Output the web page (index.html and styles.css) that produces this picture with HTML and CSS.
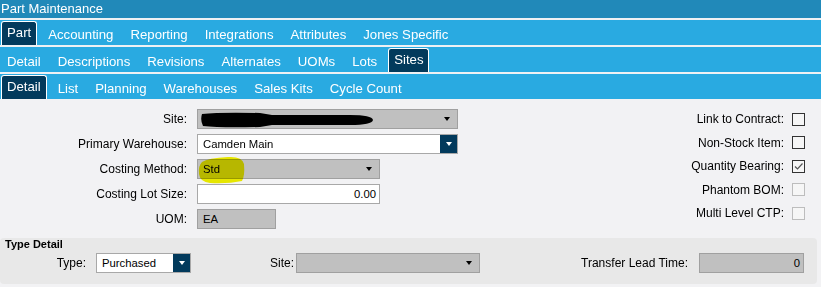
FILE: index.html
```html
<!DOCTYPE html>
<html lang="en">
<head>
  <meta charset="UTF-8">
  <title>Part Maintenance</title>
  <link rel="stylesheet" href="styles.css">
</head>
<body>

  <div class="title">Part Maintenance</div>

  <nav class="tabs">
    <span class="tab active">Part</span>
    <span class="tab">Accounting</span>
    <span class="tab">Reporting</span>
    <span class="tab">Integrations</span>
    <span class="tab">Attributes</span>
    <span class="tab">Jones Specific</span>
  </nav>
  <nav class="tabs">
    <span class="tab">Detail</span>
    <span class="tab">Descriptions</span>
    <span class="tab">Revisions</span>
    <span class="tab">Alternates</span>
    <span class="tab">UOMs</span>
    <span class="tab">Lots</span>
    <span class="tab active">Sites</span>
  </nav>
  <nav class="tabs">
    <span class="tab active">Detail</span>
    <span class="tab">List</span>
    <span class="tab">Planning</span>
    <span class="tab">Warehouses</span>
    <span class="tab">Sales Kits</span>
    <span class="tab">Cycle Count</span>
  </nav>

  <main class="page">
    <div class="main-fields">
      <div class="fields">
        <label>Site:</label>
        <div class="box grey w-site">
          <svg class="redact" width="174" height="16" viewBox="0 0 174 16">
            <path d="M2 2 Q20 0 60 1 L72 3 L150 3 Q172 3 173 8 Q172 13 150 13 L72 13 L60 15 Q20 16 3 14 Q0 8 2 2 Z" fill="#000"/>
          </svg>
          <span class="caret"></span>
        </div>

        <label>Primary Warehouse:</label>
        <div class="box white w-site has-btn">
          <span>Camden Main</span>
          <span class="drop-btn"><span class="caret light"></span></span>
        </div>

        <label>Costing Method:</label>
        <div class="box grey w-mid">
          <span>Std</span>
          <svg class="marker" width="47" height="28" viewBox="0 0 47 28">
            <path d="M4 6 Q10 2 30 1 Q44 0 46 8 Q47 20 44 25 Q30 28 12 27 Q2 26 1 18 Q0 10 4 6 Z" fill="#f3f300"/>
          </svg>
          <span class="caret"></span>
        </div>

        <label>Costing Lot Size:</label>
        <div class="box white w-mid num">0.00</div>

        <label>UOM:</label>
        <div class="box grey w-uom">EA</div>
      </div>

      <div class="flags">
        <label>Link to Contract:</label>
        <span class="check"></span>

        <label>Non-Stock Item:</label>
        <span class="check"></span>

        <label>Quantity Bearing:</label>
        <span class="check">
          <svg width="11" height="11" viewBox="0 0 11 11">
            <polyline points="2,5.5 4.5,8 9.5,2.5" fill="none" stroke="#555" stroke-width="1.2"/>
          </svg>
        </span>

        <label>Phantom BOM:</label>
        <span class="check disabled"></span>

        <label>Multi Level CTP:</label>
        <span class="check disabled"></span>
      </div>
    </div>

    <section class="type-detail">
      <div class="panel-title">Type Detail</div>
      <div class="type-row">
        <label class="type-label">Type:</label>
        <div class="box white w-type has-btn">
          <span>Purchased</span>
          <span class="drop-btn"><span class="caret light"></span></span>
        </div>

        <label class="site-label">Site:</label>
        <div class="box grey w-tsite">
          <span class="caret"></span>
        </div>

        <label class="lead-label">Transfer Lead Time:</label>
        <div class="box grey w-lead num">0</div>
      </div>
    </section>
  </main>

</body>
</html>
```

FILE: styles.css
```css
body {
  margin: 0;
  background: #f2f2f4;
  font-family: "Liberation Sans", Arial, sans-serif;
  color: #000;
}

.title {
  height: 18px;
  line-height: 18px;
  padding-left: 1px;
  background: #2189b9;
  color: #fff;
  font-size: 13px;
}

.tabs {
  display: flex;
  align-items: flex-end;
  gap: 5px;
  height: 25px;
  padding-left: 1px;
  border-top: 2px solid #eef1f4;
  background: #29aae1;
}
.tab {
  box-sizing: border-box;
  height: 24px;
  padding: 0 5px;
  border: 1px solid transparent;
  border-bottom: 0;
  border-radius: 3px 3px 0 0;
  line-height: 25px;
  color: #fff;
  font-size: 13.2px;
  white-space: nowrap;
}
.tab.active {
  background: #023a5c;
  border-color: #fff;
  line-height: 21px;
}

.page {
  padding-top: 10px;
}
.main-fields {
  display: flex;
  justify-content: space-between;
  padding-right: 16px;
}

.fields {
  display: grid;
  grid-template-columns: 187px auto;
  grid-auto-rows: 20px;
  column-gap: 10px;
  row-gap: 5px;
  align-items: center;
  font-size: 12px;
}
.fields label {
  text-align: right;
}

.box {
  position: relative;
  box-sizing: border-box;
  display: flex;
  align-items: center;
  height: 20px;
  padding: 0 5px;
  border: 1px solid #a0a0a0;
  font-size: 11.3px;
}
.box.grey {
  background: #c0c0c0;
}
.box.white {
  background: #fff;
  border-color: #a8a8a8;
}
.box.num {
  justify-content: flex-end;
  padding-right: 3px;
}
.box.has-btn {
  padding-right: 0;
}
.w-site { width: 261px; }
.w-mid { width: 183px; }
.w-uom { width: 79px; }
.w-type { width: 95px; }
.w-tsite { width: 184px; }
.w-lead { width: 105px; }

.caret {
  margin-left: auto;
  margin-right: 2px;
  border-left: 3.5px solid transparent;
  border-right: 3.5px solid transparent;
  border-top: 4px solid #000;
}
.caret.light {
  margin: 0;
  border-top-color: #fff;
}
.drop-btn {
  display: flex;
  align-items: center;
  justify-content: center;
  width: 17px;
  height: 100%;
  margin-left: auto;
  background: #023a5c;
}

.redact {
  position: absolute;
  left: 2px;
  top: 2px;
}
.marker {
  position: absolute;
  left: 0;
  top: -4px;
  mix-blend-mode: multiply;
}

.flags {
  display: grid;
  grid-template-columns: auto 13px;
  grid-auto-rows: 20px;
  column-gap: 8px;
  row-gap: 3.5px;
  align-items: center;
  font-size: 12px;
}
.flags label {
  text-align: right;
}
.check {
  box-sizing: border-box;
  display: flex;
  align-items: center;
  justify-content: center;
  width: 13px;
  height: 13px;
  border: 1px solid #333;
  background: #f6f6f6;
}
.check.disabled {
  border-color: #bdbdbd;
}

.type-detail {
  box-sizing: border-box;
  width: 817px;
  height: 46px;
  margin-top: 9px;
  padding: 0 13px 0 5px;
  border-radius: 4px;
  background: #e8e8e8;
}
.panel-title {
  height: 13px;
  line-height: 13px;
  font-size: 11px;
  font-weight: bold;
}
.type-row {
  display: flex;
  align-items: center;
  height: 20px;
  margin-top: 2px;
  font-size: 12px;
}
.type-label {
  width: 81px;
  margin-right: 10px;
  text-align: right;
}
.site-label {
  width: 24px;
  margin-left: 79px;
  margin-right: 2px;
}
.lead-label {
  flex: 1;
  margin-right: 11px;
  text-align: right;
}
```
